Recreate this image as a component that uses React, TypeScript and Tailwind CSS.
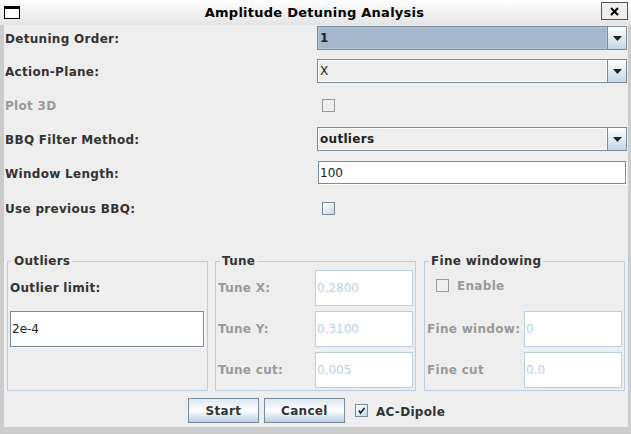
import React from "react";

const font = "font-['DejaVu_Sans','Liberation_Sans',sans-serif]";

function Triangle() {
  return (
    <svg width="9" height="5" viewBox="0 0 9 5">
      <polygon points="0,0 9,0 4.5,5" fill="#222222" />
    </svg>
  );
}

function Combo({ value, selected, bold }: { value: string; selected?: boolean; bold?: boolean }) {
  return (
    <div className="flex h-[24px] w-[310px] border border-[#7a8a99]">
      <div
        className={`flex flex-1 items-center border pl-[1px] text-[12px] text-[#222222] ${bold ? "font-bold tracking-[0.3px]" : ""} ${
          selected ? "border-[#b3c5d8] bg-[#a3b8cc]" : "border-white bg-[#eeeeee]"
        }`}
      >
        {value}
      </div>
      <div className="flex w-[19px] items-center justify-center border-l border-[#7a8a99] bg-linear-to-b from-white to-[#c6d6e7]">
        <Triangle />
      </div>
    </div>
  );
}

function CheckBox({ disabled, checked }: { disabled?: boolean; checked?: boolean }) {
  return (
    <div
      className={`flex h-[13px] w-[13px] items-center justify-center border ${
        disabled ? "border-[#999999] bg-[#eeeeee]" : "border-[#7a8a99] bg-linear-to-br from-white to-[#c8d8e8]"
      }`}
    >
      {checked && (
        <svg width="9" height="9" viewBox="0 0 9 9">
          <path d="M2 4.5 L3.5 7 L7.5 2" stroke="#222222" strokeWidth="1.6" fill="none" />
        </svg>
      )}
    </div>
  );
}

function Label({ text, disabled }: { text: string; disabled?: boolean }) {
  return (
    <span className={`text-[12px] font-bold tracking-[0.3px] ${disabled ? "text-[#999999]" : "text-[#333333]"}`}>
      {text}
    </span>
  );
}

function Field({ value, disabled, className }: { value: string; disabled?: boolean; className: string }) {
  return (
    <div
      className={`flex items-center border bg-white pl-[1px] text-[12px] ${
        disabled ? "border-[#b8cfe5] text-[#b8cfe5]" : "border-[#7a8a99] text-[#222222] shadow-[1px_1px_0_white]"
      } ${className}`}
    >
      {value}
    </div>
  );
}

function Panel({ title, className, children }: { title: string; className: string; children: React.ReactNode }) {
  return (
    <fieldset className={`flex h-[137px] w-[201px] flex-col gap-[5px] border border-[#b8cfe5] px-[2px] pt-[2px] ${className}`}>
      <legend className="ml-[2px] px-[2px] text-[12px] leading-[14px] font-bold tracking-[0.3px] text-[#333333]">
        {title}
      </legend>
      {children}
    </fieldset>
  );
}

function Button({ text, className }: { text: string; className: string }) {
  return (
    <div
      className={`flex h-[25px] items-center justify-center border border-[#7a8a99] bg-linear-to-b from-[#dde8f3] via-white to-[#b8cfe5] text-[12px] font-bold tracking-[0.3px] text-[#333333] ${className}`}
    >
      {text}
    </div>
  );
}

export default function App() {
  return (
    <div className={`flex h-[434px] w-[631px] flex-col ${font}`}>
      <header className="relative flex h-[25px] items-center bg-linear-to-b from-white to-[#e4e4e4]">
        <div className="ml-[4px] h-[13px] w-[16px] border border-t-[3px] border-black bg-white" />
        <h1 className="ml-[8px] flex-1 text-center text-[13px] font-bold tracking-[0.25px] text-black">
          Amplitude Detuning Analysis
        </h1>
        <div className="mr-[3px] mb-[3px] flex h-[18px] w-[27px] items-center justify-center border border-[#555555] bg-[#eeeeee]">
          <svg width="9" height="9" viewBox="0 0 9 9">
            <path d="M1 1 L8 8 M8 1 L1 8" stroke="#000" strokeWidth="2" />
          </svg>
        </div>
      </header>

      <div className="flex flex-1 flex-col border-r-[3px] border-b-[7px] border-l-4 border-[#cccccc] bg-[#eeeeee] pt-[1px]">
        <div className="flex h-[24px] items-center">
          <div className="w-[313px] pl-[1px]">
            <Label text="Detuning Order:" />
          </div>
          <Combo value="1" selected bold />
        </div>
        <div className="mt-[9px] flex h-[24px] items-center">
          <div className="w-[313px] pl-[1px]">
            <Label text="Action-Plane:" />
          </div>
          <Combo value="X" />
        </div>
        <div className="flex h-[44px] items-center">
          <div className="w-[313px] pl-[1px]">
            <Label text="Plot 3D" disabled />
          </div>
          <div className="pl-[5px]">
            <CheckBox disabled />
          </div>
        </div>
        <div className="flex h-[24px] items-center">
          <div className="w-[313px] pl-[1px]">
            <Label text="BBQ Filter Method:" />
          </div>
          <Combo value="outliers" bold />
        </div>
        <div className="mt-[10px] flex h-[23px] items-center">
          <div className="w-[314px] pl-[1px]">
            <Label text="Window Length:" />
          </div>
          <Field value="100" className="h-[23px] w-[308px]" />
        </div>
        <div className="flex h-[48px] items-center">
          <div className="w-[313px] pl-[1px]">
            <Label text="Use previous BBQ:" />
          </div>
          <div className="pl-[5px]">
            <CheckBox />
          </div>
        </div>

        <div className="mt-[22px] flex">
          <Panel title="Outliers" className="ml-[3px] w-[200px]">
            <div className="flex h-[36px] items-center">
              <Label text="Outlier limit:" />
            </div>
            <Field value="2e-4" className="h-[36px] w-[194px]" />
          </Panel>
          <Panel title="Tune" className="ml-[7px]">
            <div className="flex h-[36px] items-center justify-between">
              <Label text="Tune X:" disabled />
              <Field value="0.2800" disabled className="h-[36px] w-[98px]" />
            </div>
            <div className="flex h-[36px] items-center justify-between">
              <Label text="Tune Y:" disabled />
              <Field value="0.3100" disabled className="h-[36px] w-[98px]" />
            </div>
            <div className="flex h-[36px] items-center justify-between">
              <Label text="Tune cut:" disabled />
              <Field value="0.005" disabled className="h-[36px] w-[98px]" />
            </div>
          </Panel>
          <Panel title="Fine windowing" className="ml-[8px]">
            <div className="flex h-[36px] items-center gap-[8px] pb-[5px] pl-[9px]">
              <CheckBox disabled />
              <Label text="Enable" disabled />
            </div>
            <div className="flex h-[36px] items-center justify-between">
              <Label text="Fine window:" disabled />
              <Field value="0" disabled className="h-[36px] w-[98px]" />
            </div>
            <div className="flex h-[36px] items-center justify-between">
              <Label text="Fine cut" disabled />
              <Field value="0.0" disabled className="h-[36px] w-[98px]" />
            </div>
          </Panel>
        </div>

        <div className="mt-[7px] flex items-center justify-center">
          <Button text="Start" className="ml-[1px] w-[71px]" />
          <Button text="Cancel" className="ml-[5px] w-[81px]" />
          <div className="ml-[10px]">
            <CheckBox checked />
          </div>
          <div className="ml-[8px]">
            <Label text="AC-Dipole" />
          </div>
        </div>
      </div>
    </div>
  );
}
